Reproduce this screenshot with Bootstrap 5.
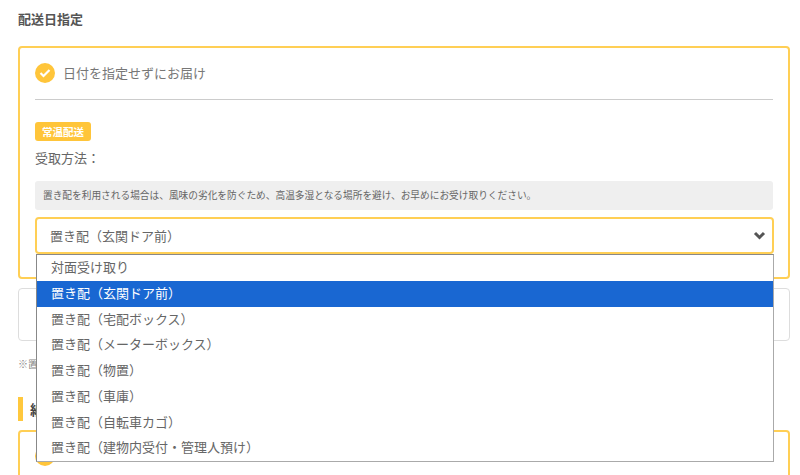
<!DOCTYPE html>
<html lang="ja">
<head>
  <meta charset="UTF-8">
  <title>配送日指定</title>
  <meta name="viewport" content="width=device-width, initial-scale=1">
  <link href="https://cdn.jsdelivr.net/npm/bootstrap@5.3.0/dist/css/bootstrap.min.css" rel="stylesheet">
  <style>
    html, body { height: 475px; overflow: hidden; }
    body { font-family: "Noto Sans CJK JP", "Liberation Sans", sans-serif; color: #666; background: #fff; padding: 10px 10px 0 18px; }
    .page-title { font-size: 13px; font-weight: 700; color: #555; line-height: 18px; margin: 0 0 18px; }
    .choice-box { border: 2px solid #ffcf55; border-radius: 4px; padding: 0 15px; }
    .choice-active { height: 233px; }
    .choice-head { height: 51px; gap: 8px; font-size: 13px; color: #777; padding-bottom: 2px; }
    .check-dot { width: 20px; height: 20px; border-radius: 50%; background: #ffc53a; flex: none; }
    .choice-rule { margin: 0; border: 0; border-top: 1px solid #ccc; opacity: 1; }
    .temp-tag { background: #ffc53a; color: #fff; font-size: 10.5px; font-weight: 700; line-height: 19px; border-radius: 3px; padding: 0 7px; margin-top: 22px; }
    .receive-label { font-size: 13px; line-height: 20px; margin: 7px 0 13px; }
    .receive-note { background: #efefef; border-radius: 3px; font-size: 9.7px; line-height: 29px; padding: 0 8px; color: #666; white-space: nowrap; }
    .select-box { height: 37px; margin: 7px -1px 0 0; border: 2px solid #ffcf55; border-radius: 4px; padding: 0 6px 0 13px; font-size: 13px; }
    .plain-box { height: 53px; margin-top: 9px; border: 1px solid #ddd; border-radius: 4px; }
    .small-note { font-size: 10px; line-height: 14px; color: #888; margin: 16px 0 0; }
    .section-title { border-left: 5px solid #ffc83d; height: 24px; line-height: 24px; font-size: 14px; font-weight: 700; color: #444; padding-left: 7px; margin-top: 26px; }
    .choice-next { height: 60px; margin-top: 9px; padding-top: 14px; }
    .option-list { position: absolute; left: 36px; top: 254px; width: 738px; height: 208px; background: #fff; border: 1px solid #888; border-right-color: #aaa; border-bottom-color: #aaa; font-size: 13px; color: #666; list-style: none; margin: 0; padding: 0; }
    .option-list li { height: 25.75px; line-height: 23px; padding-left: 14px; }
    .option-list li.picked { background: #1967d2; color: #fff; }
  </style>
</head>
<body>

  <h2 class="page-title">配送日指定</h2>

  <div class="choice-box choice-active">
    <div class="choice-head d-flex align-items-center">
      <span class="check-dot d-flex align-items-center justify-content-center">
        <svg width="12" height="10" viewBox="0 0 12 10"><path d="M1.5 5 L4.5 8 L10.5 2" fill="none" stroke="#fff" stroke-width="2.2"/></svg>
      </span>
      <span>日付を指定せずにお届け</span>
    </div>
    <hr class="choice-rule">
    <span class="temp-tag d-inline-block">常温配送</span>
    <div class="receive-label">受取方法：</div>
    <div class="receive-note">置き配を利用される場合は、風味の劣化を防ぐため、高温多湿となる場所を避け、お早めにお受け取りください。</div>
    <div class="select-box d-flex align-items-center justify-content-between">
      <span>置き配（玄関ドア前）</span>
      <svg width="13" height="9" viewBox="0 0 13 9"><path d="M2 2 L6.5 6.5 L11 2" fill="none" stroke="#555" stroke-width="3"/></svg>
    </div>
  </div>

  <div class="plain-box"></div>
  <p class="small-note">※置</p>
  <div class="section-title">納</div>
  <div class="choice-box choice-next">
    <div class="check-dot"></div>
  </div>

  <ul class="option-list">
    <li>対面受け取り</li>
    <li class="picked">置き配（玄関ドア前）</li>
    <li>置き配（宅配ボックス）</li>
    <li>置き配（メーターボックス）</li>
    <li>置き配（物置）</li>
    <li>置き配（車庫）</li>
    <li>置き配（自転車カゴ）</li>
    <li>置き配（建物内受付・管理人預け）</li>
  </ul>

  <script src="https://cdn.jsdelivr.net/npm/bootstrap@5.3.0/dist/js/bootstrap.bundle.min.js"></script>
</body>
</html>
